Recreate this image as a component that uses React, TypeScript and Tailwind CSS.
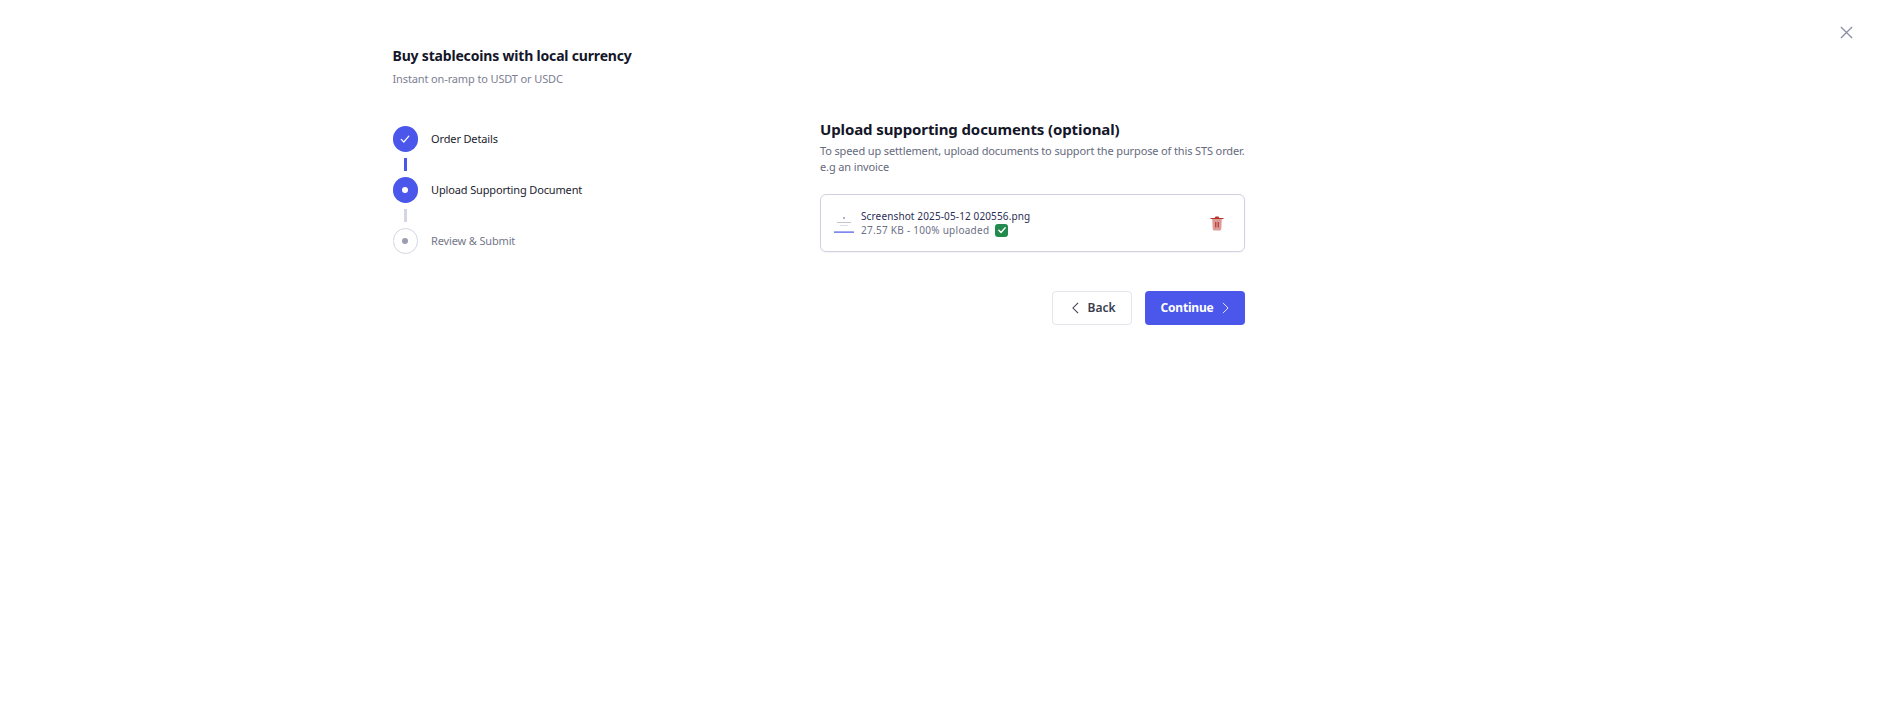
import React from "react";

const font = { fontFamily: '"Noto Sans", sans-serif' };

function Check({ className, width = 1.2 }: { className: string; width?: number }) {
  return (
    <svg viewBox="0 0 12 12" fill="none" className={className}>
      <path d="M2.2 6.4 4.8 9l5-5.8" stroke="currentColor" strokeWidth={width} strokeLinecap="round" strokeLinejoin="round" />
    </svg>
  );
}

function Step({ state, label }: { state: "done" | "active" | "todo"; label: string }) {
  return (
    <div className="flex items-center gap-[13px] h-[26px]">
      {state === "done" && (
        <div className="w-[25.6px] h-[25.6px] rounded-full bg-[#4a57ea] flex items-center justify-center text-white">
          <Check className="w-3 h-3" />
        </div>
      )}
      {state === "active" && (
        <div className="w-[25.6px] h-[25.6px] rounded-full bg-[#4a57ea] flex items-center justify-center">
          <div className="w-[6px] h-[6px] rounded-full bg-white" />
        </div>
      )}
      {state === "todo" && (
        <div className="w-[25.6px] h-[25.6px] rounded-full border border-[#d4d6e2] flex items-center justify-center">
          <div className="w-[6px] h-[6px] rounded-full bg-[#9a9daf]" />
        </div>
      )}
      <span className={`text-[11px] tracking-[-0.15px] ${state === "todo" ? "text-[#74778a]" : "text-[#1a1c2e]"}`}>{label}</span>
    </div>
  );
}

export default function App() {
  return (
    <div style={font} className="relative w-full h-[728px] bg-white overflow-hidden">
      <button className="absolute right-[26px] top-[26px] text-[#8a8fa3]">
        <svg viewBox="0 0 14 14" fill="none" className="w-[13px] h-[13px]">
          <path d="M1 1l12 12M13 1 1 13" stroke="currentColor" strokeWidth="1.4" />
        </svg>
      </button>
      <div className="w-[852.5px] ml-[392.5px] pt-[46px]">
        <h1 className="text-[14px] leading-[20px] font-bold tracking-[-0.18px] text-[#141629]">Buy stablecoins with local currency</h1>
        <p className="text-[11px] leading-[16px] mt-[5px] tracking-[-0.13px] text-[#7d8093]">Instant on-ramp to USDT or USDC</p>
        <div className="flex justify-between mt-[39px]">
          <div className="flex flex-col w-[300px]">
            <Step state="done" label="Order Details" />
            <div className="w-[2.5px] h-[13px] bg-[#4a57ea] ml-[11.5px] my-[6px]" />
            <Step state="active" label="Upload Supporting Document" />
            <div className="w-[2.5px] h-[13px] bg-[#d4d6e2] ml-[11.5px] my-[6px]" />
            <Step state="todo" label="Review & Submit" />
          </div>
          <div className="w-[425px] -mt-[9px]">
            <h2 className="text-[15px] leading-[24px] font-bold tracking-[-0.11px] text-[#141629]">Upload supporting documents (optional)</h2>
            <p className="text-[11px] leading-[16px] mt-[2px] tracking-[-0.13px] whitespace-nowrap text-[#666a7d]">
              To speed up settlement, upload documents to support the purpose of this STS order.
              <br />
              e.g an invoice
            </p>
            <div className="mt-[19px] h-[58px] rounded-[6px] border border-[#cfd1e0] flex items-center pl-[13px] pr-[20px] shadow-[0_1px_2px_rgba(20,22,41,0.05)]">
              <svg viewBox="0 0 20 20" className="w-[20px] h-[20px] mr-[7px]">
                <circle cx="10" cy="5" r="1" fill="#9a9daf" />
                <rect x="3" y="9" width="14" height="0.8" fill="#b5b7c4" />
                <rect x="6" y="12" width="8" height="0.8" fill="#d4d6e2" />
                <rect x="0" y="18.5" width="20" height="1.2" fill="#4a57ea" />
              </svg>
              <div className="flex-1 min-w-0">
                <div className="text-[10px] leading-[14px] tracking-[0.13px] text-[#2b2e55]">Screenshot 2025-05-12 020556.png</div>
                <div className="flex items-center gap-[6px] text-[10px] leading-[14px] tracking-[0.27px] text-[#6c7086]">
                  <span>27.57 KB - 100% uploaded</span>
                  <span className="w-[13px] h-[13px] rounded-[3px] bg-[#238a4d] flex items-center justify-center text-white">
                    <Check className="w-[10px] h-[10px]" width={1.7} />
                  </span>
                </div>
              </div>
              <svg viewBox="0 0 14 15" className="w-[14px] h-[15px] mt-[1px]">
                <path d="M4.6 2 5.6.5h2.8L9.4 2H13.5v1H.5V2z" fill="#b4332c" />
                <path d="M2.2 3h9.6l-.5 10a1.6 1.6 0 0 1-1.6 1.5H4.3A1.6 1.6 0 0 1 2.7 13z" fill="#dd9b97" />
                <path d="M5.2 6h1.1v5.5H5.2zM7.7 6h1.1v5.5H7.7z" fill="#b4332c" />
              </svg>
            </div>
            <div className="flex justify-end gap-[13px] mt-[39px]">
              <button className="w-[80px] h-[34px] rounded-[4px] border border-[#e5e6ec] flex items-center justify-center gap-[8px] pl-[4px] text-[12px] font-semibold text-[#3a3d4f]">
                <svg viewBox="0 0 8 14" fill="none" className="w-[7px] h-[12px]">
                  <path d="M7 1 1 7l6 6" stroke="currentColor" strokeWidth="1.2" />
                </svg>
                Back
              </button>
              <button className="w-[100px] h-[34px] rounded-[4px] bg-[#4a57ea] flex items-center justify-center gap-[9px] text-[12px] font-bold tracking-[-0.2px] text-white">
                Continue
                <svg viewBox="0 0 8 14" fill="none" className="w-[7px] h-[12px]">
                  <path d="m1 1 6 6-6 6" stroke="currentColor" strokeWidth="1" />
                </svg>
              </button>
            </div>
          </div>
        </div>
      </div>
    </div>
  );
}
